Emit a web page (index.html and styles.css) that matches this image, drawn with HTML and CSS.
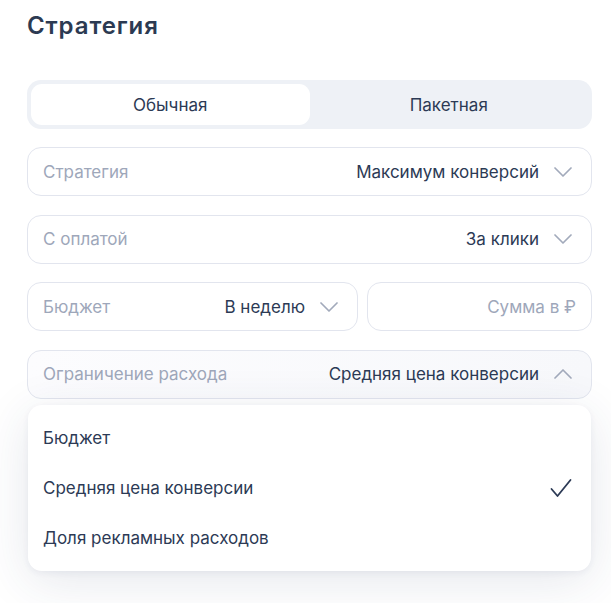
FILE: index.html
```html
<!DOCTYPE html>
<html lang="ru">
<head>
<meta charset="utf-8">
<link rel="stylesheet" href="styles.css">
</head>
<body>
<div class="panel">
  <h1 class="title">Стратегия</h1>
  <div class="segmented">
    <div class="seg seg-active">Обычная</div>
    <div class="seg">Пакетная</div>
  </div>
  <div class="fields">
    <div class="field">
      <span class="label">Стратегия</span>
      <span class="value">Максимум конверсий</span>
      <svg class="chev" width="18" height="10" viewBox="0 0 18 10"><path d="M1 1l8 8 8-8" fill="none" stroke="#a2aabb" stroke-width="1.7" stroke-linecap="round" stroke-linejoin="round"/></svg>
    </div>
    <div class="field">
      <span class="label">С оплатой</span>
      <span class="value">За клики</span>
      <svg class="chev" width="18" height="10" viewBox="0 0 18 10"><path d="M1 1l8 8 8-8" fill="none" stroke="#a2aabb" stroke-width="1.7" stroke-linecap="round" stroke-linejoin="round"/></svg>
    </div>
    <div class="row">
      <div class="field field-half">
        <span class="label">Бюджет</span>
        <span class="value">В неделю</span>
        <svg class="chev" width="18" height="10" viewBox="0 0 18 10"><path d="M1 1l8 8 8-8" fill="none" stroke="#a2aabb" stroke-width="1.7" stroke-linecap="round" stroke-linejoin="round"/></svg>
      </div>
      <div class="field field-sum">
        <span class="placeholder">Сумма в ₽</span>
      </div>
    </div>
    <div class="select-wrap">
      <div class="field field-open">
        <span class="label">Ограничение расхода</span>
        <span class="value">Средняя цена конверсии</span>
        <svg class="chev" width="18" height="10" viewBox="0 0 18 10"><path d="M1 9l8-8 8 8" fill="none" stroke="#a2aabb" stroke-width="1.7" stroke-linecap="round" stroke-linejoin="round"/></svg>
      </div>
      <div class="menu">
        <div class="menu-item">Бюджет</div>
        <div class="menu-item">Средняя цена конверсии
          <svg class="check" width="22" height="20" viewBox="0 0 22 20"><path d="M1.5 11l6 7L20.5 2" fill="none" stroke="#2c3a55" stroke-width="1.8" stroke-linecap="round" stroke-linejoin="round"/></svg>
        </div>
        <div class="menu-item">Доля рекламных расходов</div>
      </div>
    </div>
  </div>
</div>
</body>
</html>
```
FILE: styles.css
```css
* { box-sizing: border-box; }
html, body { margin: 0; background: #ffffff; }
body {
  font-family: "Inter", "Noto Sans", sans-serif;
  color: #2c3a55;
  width: 611px;
  height: 603px;
  overflow: hidden;
}
.panel {
  padding: 10px 19px 0 27px;
}
.title {
  margin: 0;
  font-size: 24px;
  line-height: 32px;
  font-weight: 600;
  color: #2c3a52;
  letter-spacing: 0.9px;
}
.segmented {
  margin-top: 38px;
  height: 49px;
  background: #eef1f6;
  border-radius: 14px;
  padding: 4px;
  display: flex;
}
.seg {
  flex: 1;
  display: flex;
  align-items: center;
  justify-content: center;
  font-size: 17px;
  border-radius: 11px;
  color: #2c3a55;
}
.seg-active {
  background: #ffffff;
}
.fields {
  margin-top: 18px;
  display: flex;
  flex-direction: column;
  gap: 18.6px;
}
.row {
  display: flex;
  gap: 9px;
}
.field {
  height: 49px;
  border: 1px solid #e2e5ee;
  border-radius: 14px;
  display: flex;
  align-items: center;
  padding: 0 19px 0 15px;
  font-size: 17px;
  background: #fff;
}
.field-half { width: 331px; }
.field-sum { flex: 1; justify-content: flex-end; padding-right: 15px; }
.label { color: #9ea7ba; }
.value { margin-left: auto; color: #2c3a55; }
.placeholder { color: #9ea7ba; }
.chev { margin-left: 15px; flex-shrink: 0; }
.select-wrap { position: relative; }
.field-open {
  background: linear-gradient(90deg, #fcfcfe, #f7f8fb);
}
.menu {
  position: absolute;
  left: 1px;
  right: 1px;
  top: calc(100% + 6px);
  background: #ffffff;
  border-radius: 14px;
  padding: 8px 0;
  box-shadow: 0 10px 50px rgba(40, 55, 100, 0.12), 0 2px 6px rgba(40, 55, 100, 0.06);
}
.menu-item {
  height: 50px;
  display: flex;
  align-items: center;
  padding: 0 19px 0 15px;
  font-size: 17px;
  color: #2c3a55;
}
.check { margin-left: auto; }
```
